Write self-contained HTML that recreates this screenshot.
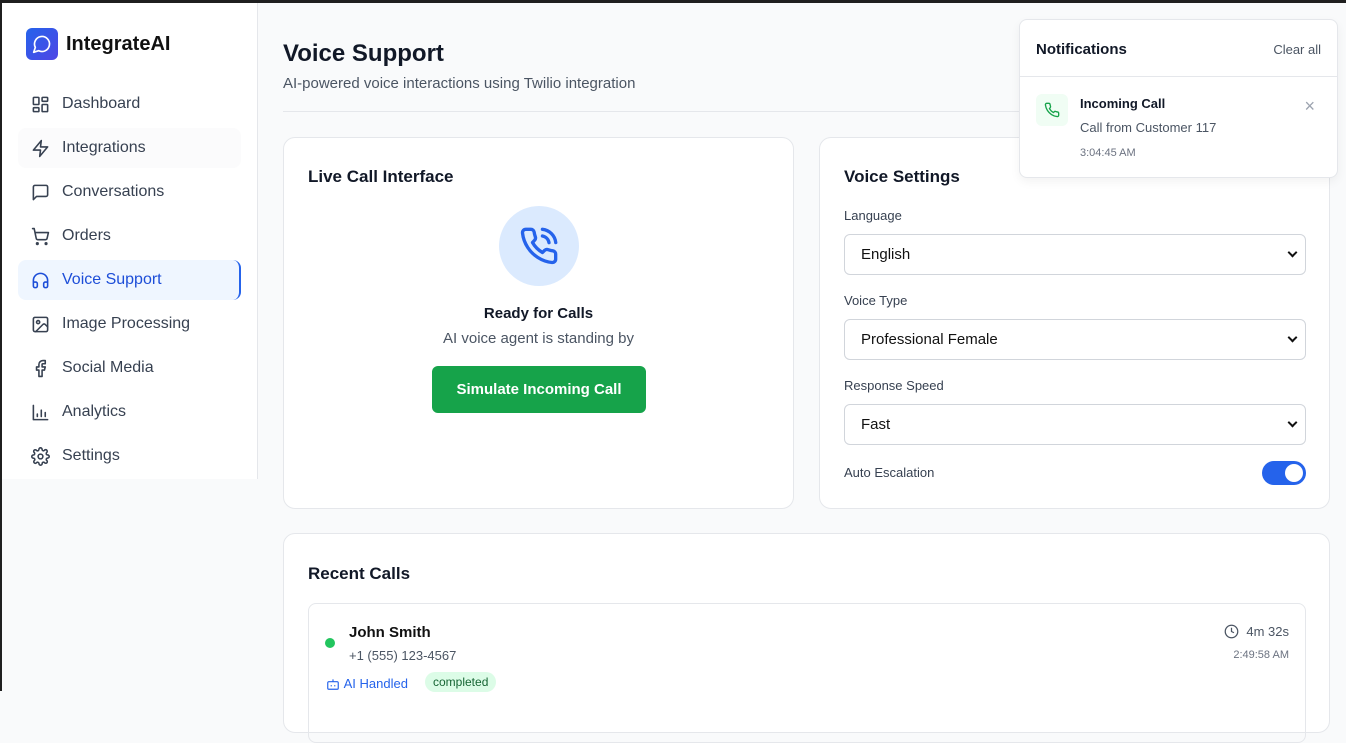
<!DOCTYPE html>
<html><head><meta charset="utf-8"><style>
*{box-sizing:border-box;margin:0;padding:0}
body{width:1346px;height:691px;overflow:hidden;background:#f9fafb;font-family:"Liberation Sans",sans-serif;color:#111827;position:relative}
.topbar{position:absolute;left:0;top:0;width:1346px;height:3px;background:#1f1f1f}
.leftbar{position:absolute;left:0;top:0;width:2px;height:691px;background:#1f1f1f}
.side{position:absolute;left:2px;top:3px;width:256px;height:476px;background:#fff;border-right:1px solid #e5e7eb}
.logo{position:absolute;left:24px;top:25px;display:flex;align-items:center}
.logo .ic{width:32px;height:32px;border-radius:6px;background:linear-gradient(135deg,#2563eb,#4f46e5);display:flex;align-items:center;justify-content:center}
.logo span{font-size:20px;font-weight:bold;margin-left:8px;color:#111}
.nav{position:absolute;left:16px;top:81px;width:223px}
.item{height:40px;margin-bottom:4px;display:flex;align-items:center;padding-left:13px;font-size:16px;color:#374151;border-radius:8px}
.item svg{width:19px;height:19px;margin-right:12px;fill:none;stroke:#374151;stroke-width:2;stroke-linecap:round;stroke-linejoin:round}
.item.hov{background:#fbfbfc}
.item.act{background:#eff6ff;color:#1d4ed8;border-right:2px solid #2563eb}
.item.act svg{stroke:#1d4ed8}
h1{position:absolute;left:283px;top:40px;font-size:24px;font-weight:bold}
.sub{position:absolute;left:283px;top:75px;font-size:15px;color:#4b5563}
.hr{position:absolute;left:283px;top:111px;width:1046px;height:1px;background:#e5e7eb}
.card{position:absolute;background:#fff;border:1px solid #e5e7eb;border-radius:12px}
.ct{position:absolute;left:24px;top:29px;font-size:17px;font-weight:bold;color:#111827}
label{position:absolute;left:24px;font-size:13px;color:#374151}
.sel{position:absolute;left:24px;width:462px;height:41px;border:1px solid #d1d5db;border-radius:6px;padding-left:16px;font-size:15px;line-height:39px;color:#111}
.sel:after{content:"";position:absolute;right:9px;top:14px;width:5px;height:5px;border-right:2px solid #111;border-bottom:2px solid #111;transform:rotate(45deg)}
.notif{position:absolute;left:1019px;top:19px;width:319px;height:159px;background:#fff;border:1px solid #e5e7eb;border-radius:8px;box-shadow:0 4px 10px rgba(0,0,0,.05)}
</style></head><body>
<div class="topbar"></div><div class="leftbar"></div>
<div class="side">
 <div class="logo"><div class="ic"><svg width="20" height="20" viewBox="0 0 24 24" fill="none" stroke="#fff" stroke-width="2" stroke-linecap="round" stroke-linejoin="round"><path d="M7.9 20A9 9 0 1 0 4 16.1L2 22Z"/></svg></div><span>IntegrateAI</span></div>
 <div class="nav">
  <div class="item"><svg viewBox="0 0 24 24"><rect x="3" y="3" width="7" height="9" rx="1"/><rect x="14" y="3" width="7" height="5" rx="1"/><rect x="14" y="12" width="7" height="9" rx="1"/><rect x="3" y="16" width="7" height="5" rx="1"/></svg>Dashboard</div>
  <div class="item hov"><svg viewBox="0 0 24 24"><path d="M13 2 3 14h9l-1 8 10-12h-9l1-8z"/></svg>Integrations</div>
  <div class="item"><svg viewBox="0 0 24 24"><path d="M21 15a2 2 0 0 1-2 2H7l-4 4V5a2 2 0 0 1 2-2h14a2 2 0 0 1 2 2z"/></svg>Conversations</div>
  <div class="item"><svg viewBox="0 0 24 24"><circle cx="8" cy="21" r="1"/><circle cx="19" cy="21" r="1"/><path d="M2 2h2l2.6 12.4a2 2 0 0 0 2 1.6h9.7a2 2 0 0 0 2-1.6L22 7H5.1"/></svg>Orders</div>
  <div class="item act"><svg viewBox="0 0 24 24"><path d="M3 14h3a2 2 0 0 1 2 2v3a2 2 0 0 1-2 2H5a2 2 0 0 1-2-2v-7a9 9 0 0 1 18 0v7a2 2 0 0 1-2 2h-1a2 2 0 0 1-2-2v-3a2 2 0 0 1 2-2h3"/></svg>Voice Support</div>
  <div class="item"><svg viewBox="0 0 24 24"><rect x="3" y="3" width="18" height="18" rx="2"/><circle cx="9" cy="9" r="2"/><path d="m21 15-3-3a2 2 0 0 0-3 0L6 21"/></svg>Image Processing</div>
  <div class="item"><svg viewBox="0 0 24 24"><path d="M18 2h-3a5 5 0 0 0-5 5v3H7v4h3v8h4v-8h3l1-4h-4V7a1 1 0 0 1 1-1h3z"/></svg>Social Media</div>
  <div class="item"><svg viewBox="0 0 24 24"><path d="M3 3v18h18M8 17v-3M13 17V9M18 17v-5"/></svg>Analytics</div>
  <div class="item"><svg viewBox="0 0 24 24"><circle cx="12" cy="12" r="3"/><path d="M19.4 15a1.7 1.7 0 0 0 .3 1.8l.1.1a2 2 0 1 1-2.8 2.8l-.1-.1a1.7 1.7 0 0 0-1.8-.3 1.7 1.7 0 0 0-1 1.5V21a2 2 0 1 1-4 0v-.1a1.7 1.7 0 0 0-1.1-1.5 1.7 1.7 0 0 0-1.8.3l-.1.1a2 2 0 1 1-2.8-2.8l.1-.1a1.7 1.7 0 0 0 .3-1.8 1.7 1.7 0 0 0-1.5-1H3a2 2 0 1 1 0-4h.1a1.7 1.7 0 0 0 1.5-1.1 1.7 1.7 0 0 0-.3-1.8l-.1-.1a2 2 0 1 1 2.8-2.8l.1.1a1.7 1.7 0 0 0 1.8.3H9a1.7 1.7 0 0 0 1-1.5V3a2 2 0 1 1 4 0v.1a1.7 1.7 0 0 0 1 1.5 1.7 1.7 0 0 0 1.8-.3l.1-.1a2 2 0 1 1 2.8 2.8l-.1.1a1.7 1.7 0 0 0-.3 1.8V9a1.7 1.7 0 0 0 1.5 1H21a2 2 0 1 1 0 4h-.1a1.7 1.7 0 0 0-1.5 1z"/></svg>Settings</div>
 </div>
</div>
<h1>Voice Support</h1>
<div class="sub">AI-powered voice interactions using Twilio integration</div>
<div class="hr"></div>

<div class="card" style="left:283px;top:137px;width:511px;height:372px">
 <div class="ct">Live Call Interface</div>
 <div style="position:absolute;left:215px;top:68px;width:80px;height:80px;border-radius:50%;background:#dbeafe;display:flex;align-items:center;justify-content:center">
  <svg width="40" height="40" viewBox="0 0 24 24" fill="none" stroke="#2563eb" stroke-width="2" stroke-linecap="round" stroke-linejoin="round"><path d="M22 16.9v3a2 2 0 0 1-2.2 2 19.8 19.8 0 0 1-8.6-3.1 19.5 19.5 0 0 1-6-6A19.8 19.8 0 0 1 2.1 4.2 2 2 0 0 1 4.1 2h3a2 2 0 0 1 2 1.7c.1 1 .4 1.9.7 2.8a2 2 0 0 1-.5 2.1L8.1 9.9a16 16 0 0 0 6 6l1.3-1.3a2 2 0 0 1 2.1-.4c.9.3 1.8.6 2.8.7a2 2 0 0 1 1.7 2z"/><path d="M14.05 2a9 9 0 0 1 8 7.94M14.05 6A5 5 0 0 1 18 10"/></svg>
 </div>
 <div style="position:absolute;left:0;width:509px;top:167px;text-align:center;font-size:15px;font-weight:bold">Ready for Calls</div>
 <div style="position:absolute;left:0;width:509px;top:192px;text-align:center;font-size:15px;color:#4b5563">AI voice agent is standing by</div>
 <div style="position:absolute;left:148px;top:228px;width:214px;height:47px;background:#16a34a;border-radius:6px;color:#fff;font-size:15px;font-weight:bold;text-align:center;line-height:47px">Simulate Incoming Call</div>
</div>

<div class="card" style="left:819px;top:137px;width:511px;height:372px">
 <div class="ct">Voice Settings</div>
 <label style="top:70px">Language</label>
 <div class="sel" style="top:96px">English</div>
 <label style="top:155px">Voice Type</label>
 <div class="sel" style="top:181px">Professional Female</div>
 <label style="top:240px">Response Speed</label>
 <div class="sel" style="top:266px">Fast</div>
 <label style="top:327px">Auto Escalation</label>
 <div style="position:absolute;left:442px;top:323px;width:44px;height:24px;border-radius:12px;background:#2563eb"><div style="position:absolute;right:3px;top:3px;width:18px;height:18px;border-radius:50%;background:#fff"></div></div>
</div>

<div class="card" style="left:283px;top:533px;width:1047px;height:200px">
 <div class="ct" style="top:30px">Recent Calls</div>
 <div style="position:absolute;left:24px;top:69px;width:998px;height:140px;border:1px solid #e5e7eb;border-radius:8px">
  <div style="position:absolute;left:16px;top:34px;width:10px;height:10px;border-radius:50%;background:#22c55e"></div>
  <div style="position:absolute;left:40px;top:20px;font-size:15px;font-weight:bold;color:#111">John Smith</div>
  <div style="position:absolute;left:40px;top:44px;font-size:13px;color:#4b5563">+1 (555) 123-4567</div>
  <div style="position:absolute;left:17px;top:72px;font-size:13px;color:#2563eb;display:flex;align-items:center"><svg width="14" height="14" viewBox="0 0 24 24" fill="none" stroke="#2563eb" stroke-width="2"><rect x="3" y="8" width="18" height="13" rx="2"/><path d="M12 8V4M9 14v2M15 14v2"/></svg>&nbsp;AI Handled</div>
  <div style="position:absolute;left:116px;top:68px;padding:3px 8px;border-radius:12px;background:#dcfce7;color:#166534;font-size:12px">completed</div>
  <div style="position:absolute;right:16px;top:20px;font-size:13px;color:#4b5563;display:flex;align-items:center"><svg width="15" height="15" viewBox="0 0 24 24" fill="none" stroke="#4b5563" stroke-width="2"><circle cx="12" cy="12" r="10"/><path d="M12 6v6l4 2"/></svg>&nbsp;&nbsp;4m 32s</div>
  <div style="position:absolute;right:16px;top:45px;font-size:11px;color:#6b7280">2:49:58 AM</div>
 </div>
</div>

<div class="notif">
 <div style="position:absolute;left:16px;top:21px;font-size:15px;font-weight:bold;color:#111827">Notifications</div>
 <div style="position:absolute;right:16px;top:22px;font-size:13px;color:#4b5563">Clear all</div>
 <div style="position:absolute;left:0;top:56px;width:317px;height:1px;background:#e5e7eb"></div>
 <div style="position:absolute;left:16px;top:74px;width:32px;height:32px;border-radius:6px;background:#f0fdf4;display:flex;align-items:center;justify-content:center"><svg width="16" height="16" viewBox="0 0 24 24" fill="none" stroke="#16a34a" stroke-width="2" stroke-linecap="round" stroke-linejoin="round"><path d="M22 16.9v3a2 2 0 0 1-2.2 2 19.8 19.8 0 0 1-8.6-3.1 19.5 19.5 0 0 1-6-6A19.8 19.8 0 0 1 2.1 4.2 2 2 0 0 1 4.1 2h3a2 2 0 0 1 2 1.7c.1 1 .4 1.9.7 2.8a2 2 0 0 1-.5 2.1L8.1 9.9a16 16 0 0 0 6 6l1.3-1.3a2 2 0 0 1 2.1-.4c.9.3 1.8.6 2.8.7a2 2 0 0 1 1.7 2z"/></svg></div>
 <div style="position:absolute;left:60px;top:76px;font-size:13px;font-weight:bold;color:#111827">Incoming Call</div>
 <div style="position:absolute;left:60px;top:100px;font-size:13px;color:#4b5563">Call from Customer 117</div>
 <div style="position:absolute;left:60px;top:127px;font-size:11px;color:#6b7280">3:04:45 AM</div>
 <div style="position:absolute;right:22px;top:76px;font-size:18px;color:#9ca3af">×</div>
</div>
</body></html>
